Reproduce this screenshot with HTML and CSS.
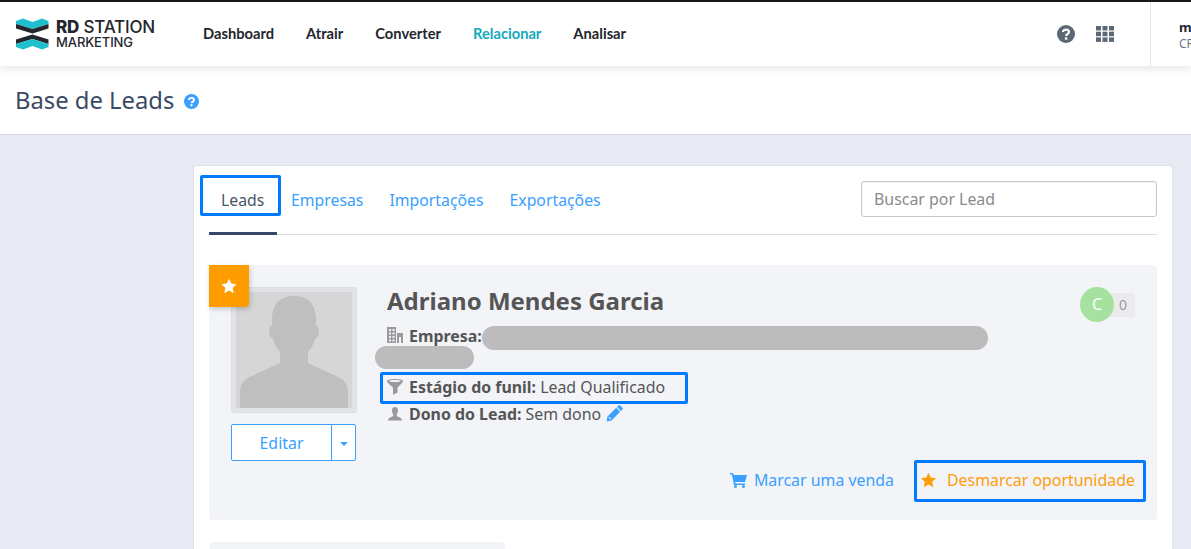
FILE: index.html
```html
<!DOCTYPE html>
<html lang="pt-BR">
<head>
<meta charset="utf-8">
<title>Base de Leads</title>
<link rel="stylesheet" href="styles.css">
</head>
<body>
<header class="topbar">
  <div class="logo">
    <svg class="logo-mark" width="33" height="32" viewBox="0 0 33 32">
      <path d="M0 3 L7 0.500 L16.500 4 L26 0.500 L32.500 3 L32.500 6 L16.500 11 L0 6Z" fill="#1fc0cd"/>
      <path d="M0 6 L16.500 11 L32.500 6 L32.500 10.500 L16.500 15.500 L0 10.500Z" fill="#23262d"/>
      <path d="M0 21.500 L16.500 16.500 L32.500 21.500 L32.500 26 L16.500 21 L0 26Z" fill="#23262d"/>
      <path d="M0 26 L16.500 21 L32.500 26 L32.500 29 L26 31.500 L16.500 28 L7 31.500 L0 29Z" fill="#1fc0cd"/>
    </svg>
    <div class="logo-text">
      <div class="logo-line1"><b>RD</b> STATION</div>
      <div class="logo-line2">MARKETING</div>
    </div>
  </div>
  <nav class="mainnav">
    <a>Dashboard</a><a>Atrair</a><a>Converter</a><a class="active">Relacionar</a><a>Analisar</a>
  </nav>
  <div class="top-icons">
    <svg width="18" height="18" viewBox="0 0 18 18"><circle cx="9" cy="9" r="9" fill="#5c6875"/><path d="M6 7 C6 3.800 12 3.800 12 7 C12 9 9.300 8.800 9.100 11" fill="none" stroke="#fff" stroke-width="2.200"/><rect x="7.900" y="12.300" width="2.400" height="2.400" fill="#fff"/></svg>
    <svg width="18" height="16" viewBox="0 0 18 16" fill="#5c6875"><rect width="5" height="4.500"/><rect x="6.500" width="5" height="4.500"/><rect x="13" width="5" height="4.500"/><rect y="5.700" width="5" height="4.500"/><rect x="6.500" y="5.700" width="5" height="4.500"/><rect x="13" y="5.700" width="5" height="4.500"/><rect y="11.400" width="5" height="4.500"/><rect x="6.500" y="11.400" width="5" height="4.500"/><rect x="13" y="11.400" width="5" height="4.500"/></svg>
  </div>
  <div class="account">
    <div class="account-name">marketing</div>
    <div class="account-sub">CRM</div>
  </div>
</header>

<section class="pagehead">
  <h1>Base de Leads</h1>
  <svg width="15" height="15" viewBox="0 0 15 15"><circle cx="7.500" cy="7.500" r="7.500" fill="#3a9fff"/><path d="M5 6 C5 3.200 10 3.200 10 6 C10 7.700 7.700 7.500 7.500 9.200" fill="none" stroke="#fff" stroke-width="1.800"/><rect x="6.500" y="10.200" width="2" height="2" fill="#fff"/></svg>
</section>

<main class="content">
  <div class="card">
    <div class="tabs-row">
      <div class="tabs">
        <a class="tab tab-current">Leads</a>
        <a class="tab">Empresas</a>
        <a class="tab">Importações</a>
        <a class="tab">Exportações</a>
      </div>
      <div class="search">Buscar por Lead</div>
    </div>

    <article class="lead">
      <div class="flag">
        <svg width="16" height="16" viewBox="0 0 24 24"><path fill="#fff" d="M12 1 L15.400 8.300 L23.400 9.300 L17.500 14.800 L19.100 22.700 L12 18.800 L4.900 22.700 L6.500 14.800 L0.600 9.300 L8.600 8.300Z"/></svg>
      </div>
      <div class="lead-top">
        <div class="lead-side">
          <div class="avatar">
            <svg width="116" height="116" viewBox="0 0 116 116">
              <rect width="116" height="116" fill="#d6d6d6"/>
              <path fill="#bfbfbf" d="M36 28 C36 12 44 4 58 4 C72 4 80 12 80 28 L80 33 C84 35 84 45 79 47 C77 53 75 57 72 60 L72 71 L100 84 C108 87 112 92 112 100 L112 116 L4 116 L4 100 C4 92 8 87 16 84 L44 71 L44 60 C41 57 39 53 37 47 C32 45 32 35 36 33Z"/>
            </svg>
          </div>
          <div class="edit-group">
            <button class="edit-main">Editar</button>
            <button class="edit-caret"><span class="caret"></span></button>
          </div>
        </div>
        <div class="lead-info">
          <div class="name-row">
            <h2>Adriano Mendes Garcia</h2>
            <div class="score"><span class="score-letter">C</span><span class="score-num">0</span></div>
          </div>
          <div class="field field-company">
            <svg class="field-icon" width="16" height="16" viewBox="0 0 16 16" fill="#9a9a9a"><path d="M0 0H9V16H0ZM2 2V4H4V2ZM5.500 2V4H7.500V2ZM2 5.500V7.500H4V5.500ZM5.500 5.500V7.500H7.500V5.500ZM2 9V11H4V9ZM5.500 9V11H7.500V9ZM2 12.500V14.500H4V12.500ZM5.500 12.500V14.500H7.500V12.500Z" fill-rule="evenodd"/><path d="M10 6H16V16H14V10H12V16H10Z"/></svg>
            <span><b>Empresa:</b></span>
            <span class="blur blur-a"></span>
            <span class="blur blur-b"></span>
          </div>
          <div class="field field-stage">
            <svg class="field-icon" width="16" height="16" viewBox="0 0 16 16" fill="#9a9a9a"><path d="M8 0 C12.500 0 16 0.800 16 2.200 C16 3.200 14 5 10.500 8.500 L10.500 13.500 L6 15.800 L6 8.500 C2 5 0 3.200 0 2.200 C0 0.800 3.500 0 8 0Z M8 1 C4.500 1 2 1.500 2 2 C2 2.500 4.500 3 8 3 C11.500 3 14 2.500 14 2 C14 1.500 11.500 1 8 1Z" fill-rule="evenodd"/></svg>
            <span><b>Estágio do funil:</b> Lead Qualificado</span>
          </div>
          <div class="field field-owner">
            <svg class="field-icon" width="16" height="16" viewBox="0 0 16 16" fill="#9a9a9a"><path d="M5 4 C5 0 11 0 11 4 C11 6 10.500 7.500 9.800 8.500 L9.800 10 C11 11 15 11.500 15 14.500 L1 14.500 C1 11.500 5 11 6.200 10 L6.200 8.500 C5.500 7.500 5 6 5 4Z"/></svg>
            <span><b>Dono do Lead:</b> Sem dono</span>
            <svg class="pencil" width="17" height="17" viewBox="0 0 17 17"><path fill="#3a9fff" d="M12.500 0.500 C13.200 0 13.800 0 14.300 0.500 L16.500 2.700 C17 3.200 17 3.800 16.500 4.500 L15 6 L11 2Z M10.200 2.800 L14.200 6.800 L5.500 15.500 L0.500 16.500 L1.500 11.500Z M3.200 11.700 L2.400 12.500 L4.500 14.600 L5.300 13.800Z" fill-rule="evenodd"/></svg>
          </div>
        </div>
      </div>
      <div class="lead-actions">
        <a class="action-sale">
          <svg width="17" height="15" viewBox="0 0 17 15" fill="#3a9fff"><path d="M0 0H3L3.700 2H17L15 9H5.200L5.500 10.500H15V12H4L1.900 1.500H0Z"/><circle cx="5.500" cy="13.500" r="1.500"/><circle cx="13.500" cy="13.500" r="1.500"/></svg>
          <span>Marcar uma venda</span>
        </a>
        <a class="action-opp">
          <svg width="17" height="16" viewBox="0 0 24 24"><path fill="#ff9d0b" d="M12 1 L15.400 8.300 L23.400 9.300 L17.500 14.800 L19.100 22.700 L12 18.800 L4.900 22.700 L6.500 14.800 L0.600 9.300 L8.600 8.300Z"/></svg>
          <span>Desmarcar oportunidade</span>
        </a>
      </div>
    </article>

    <div class="next-panel"></div>
  </div>
</main>
</body>
</html>
```
FILE: styles.css
```css
* { box-sizing: border-box; }
html, body { margin: 0; height: 549px; overflow: hidden; }
body {
  background: #e7eaf2;
  font-family: "Noto Sans", "Open Sans", sans-serif;
  color: #555;
  border-top: 2px solid #16181d;
}
.topbar {
  position: relative;
  z-index: 2;
  display: flex;
  align-items: center;
  height: 64px;
  background: #fff;
  box-shadow: 0 2px 10px rgba(0, 0, 0, .12);
}
.logo { display: flex; align-items: center; margin-left: 16px; width: 187px; }
.logo-mark { display: block; }
.logo-text { margin-left: 7px; color: #23262d; font-family: "Inter", sans-serif; }
.logo-line1 { font-size: 17px; line-height: 15px; font-weight: 500; letter-spacing: -.2px; white-space: nowrap; }
.logo-line1 b { font-weight: 800; }
.logo-line2 { margin-top: 2px; font-size: 13px; line-height: 11px; font-weight: 500; letter-spacing: -.1px; }
.mainnav { display: flex; gap: 32px; padding-bottom: 2px; }
.mainnav a { font-family: "Lato", sans-serif; font-weight: 700; font-size: 14.700px; color: #23262d; }
.mainnav a.active { color: #14a9bd; }
.top-icons { display: flex; align-items: center; gap: 21px; margin-left: auto; margin-right: 36px; padding-bottom: 1px; }
.top-icons svg { display: block; }
.account {
  align-self: stretch;
  width: 41px;
  padding: 16px 0 0 28px;
  border-left: 1px solid #e2e3e8;
  overflow: hidden;
  white-space: nowrap;
}
.account-name { font-size: 13px; line-height: 18px; font-weight: 700; color: #23262d; }
.account-sub { font-size: 12px; line-height: 16px; color: #6b7785; }

.pagehead {
  display: flex;
  align-items: center;
  gap: 10px;
  height: 69px;
  padding: 0 0 0 15px;
  background: #fff;
  border-bottom: 1px solid #d9dbe2;
}
.pagehead h1 { margin: 0; font-size: 23.800px; line-height: 32px; font-weight: 400; color: #3b4a63; }
.pagehead svg { margin-top: 2px; }

.content { padding: 30px 18px 0 193px; }
.card {
  height: 384px;
  padding: 0 15px 0 15px;
  background: #fff;
  border: 1px solid #dfe1e6;
  border-bottom: 0;
  border-radius: 4px 4px 0 0;
  overflow: hidden;
}
.tabs-row {
  position: relative;
  display: flex;
  justify-content: space-between;
  align-items: flex-start;
  height: 69px;
  border-bottom: 1px solid #dcdcdc;
}
.tabs { display: flex; gap: 26px; margin-top: 9px; margin-left: -9px; }
.tab { font-size: 15.800px; line-height: 41px; padding-top: 5px; color: #3a9fff; }
.tab:nth-child(2) { margin-left: -16px; }
.tab-current {
  width: 81px;
  height: 41px;
  padding-top: 0;
  padding-left: 18px;
  color: #4a5568;
  border: 3px solid #007bff;
  border-radius: 2px;
  line-height: 45px;
  white-space: nowrap;
}
.tabs-row::after {
  content: "";
  position: absolute;
  left: 0;
  bottom: -1px;
  width: 68px;
  height: 3px;
  background: #36476a;
}
.search {
  width: 296px;
  height: 36px;
  margin-top: 15px;
  padding-left: 12px;
  font-size: 15.900px;
  line-height: 35px;
  color: #8a8a8a;
  border: 1px solid #c8c8c8;
  border-radius: 3px;
  box-shadow: inset 0 1px 2px rgba(0, 0, 0, .05);
}

.lead {
  position: relative;
  height: 255px;
  margin-top: 30px;
  padding: 22px 22px 0 22px;
  background: #f2f4f8;
  border-radius: 4px;
}
.flag {
  position: absolute;
  left: 0;
  top: 0;
  display: flex;
  align-items: center;
  justify-content: center;
  width: 40px;
  height: 42px;
  background: #ff9d00;
  border-radius: 0 0 4px 0;
  box-shadow: 1px 2px 5px rgba(0, 0, 0, .2);
  padding-bottom: 1px;
}
.lead-top { display: flex; gap: 30px; }
.lead-side { width: 126px; flex: none; }
.avatar {
  width: 126px;
  height: 126px;
  padding: 4px;
  background: #e2e3e6;
  border: 1px solid #dcdde1;
  border-radius: 3px;
}
.avatar svg { display: block; }
.edit-group { display: flex; width: 125px; height: 37px; margin-top: 11px; }
.edit-group button {
  font-family: inherit;
  font-size: 15.900px;
  color: #3a9fff;
  background: #fff;
  border: 1px solid #3a9fff;
  padding: 0;
}
.edit-main { width: 101px; border-radius: 2px 0 0 2px; }
.edit-caret { flex: 1; margin-left: -1px; border-radius: 0 2px 2px 0; display: flex; align-items: center; justify-content: center; }
.caret { margin-top: 2px; border-top: 4px solid #3a9fff; border-left: 4px solid transparent; border-right: 4px solid transparent; }

.lead-info { flex: 1; min-width: 0; }
.name-row { display: flex; justify-content: space-between; height: 34px; }
h2 { margin: 0; font-size: 24px; line-height: 28px; font-weight: 700; color: #555; }
.score { display: flex; align-items: center; height: 35px; }
.score-letter {
  position: relative;
  width: 34px;
  height: 35px;
  line-height: 34px;
  text-align: center;
  font-size: 16px;
  color: #fff;
  background: #a5e2a0;
  border-radius: 50%;
}
.score-num {
  width: 26px;
  height: 24px;
  margin-left: -5px;
  padding-left: 10px;
  font-size: 14px;
  line-height: 24px;
  color: #999;
  background: #ebebee;
  border-radius: 3px;
}
.field { position: relative; display: flex; align-items: center; gap: 6px; font-size: 15.900px; height: 24px; white-space: pre; }
.field b { font-weight: 700; }
.field-icon { flex: none; }
.field-company { height: 56px; padding-top: 3px; align-items: flex-start; line-height: 24px; }
.field-company .field-icon { margin-top: 3px; }
.field-stage {
  width: 308px;
  height: 32px;
  margin-left: -7px;
  padding-left: 4px;
  padding-bottom: 2px;
  border: 3px solid #007bff;
  border-radius: 2px;
  margin-top: -5px;
}
.field-owner { height: 22px; margin-top: -1px; }
.blur { position: absolute; height: 24px; background: #bcbcbc; border-radius: 12px; }
.blur-a { left: 95px; top: 5px; width: 506px; }
.blur-b { left: -12px; top: 25px; width: 99px; height: 23px; }
.pencil { margin-left: -1px; margin-top: -2px; }

.lead-actions { position: absolute; right: 11px; bottom: 18px; display: flex; align-items: center; gap: 20px; font-size: 15.900px; }
.action-sale { display: flex; align-items: center; gap: 7px; color: #3a9fff; padding-bottom: 2px; }
.action-opp {
  display: flex;
  align-items: center;
  gap: 10px;
  width: 232px;
  height: 42px;
  padding-left: 3px;
  padding-bottom: 2px;
  color: #ff9d0b;
  border: 3px solid #007bff;
  border-radius: 2px;
  white-space: nowrap;
}
.next-panel { width: 296px; height: 40px; margin-top: 22px; background: #f2f4f8; border-radius: 4px; }
```
